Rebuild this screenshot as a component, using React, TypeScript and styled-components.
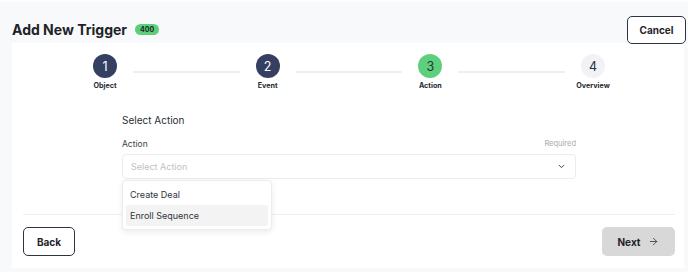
import React from "react";
import styled, { createGlobalStyle } from "styled-components";
import { ArrowRight, ChevronDown } from "lucide-react";

const GlobalStyle = createGlobalStyle`
  html, body {
    margin: 0;
    padding: 0;
    background: #f8f9fa;
    font-family: Inter, "Liberation Sans", sans-serif;
    color: #222831;
  }
  * { box-sizing: border-box; }
`;

const Page = styled.div`
  width: 688px;
  height: 272px;
  border-top: 2px solid #fdfdfe;
  overflow: hidden;
`;

const Header = styled.div`
  display: flex;
  align-items: center;
  justify-content: space-between;
  height: 41px;
  padding: 14px 2px 0 12px;
`;

const TitleWrap = styled.div`
  display: flex;
  align-items: center;
  gap: 8px;
`;

const Title = styled.h1`
  margin: 0;
  font-size: 14px;
  font-weight: 700;
  color: #1f2329;
`;

const Badge = styled.span`
  display: inline-flex;
  align-items: center;
  justify-content: center;
  height: 11px;
  padding: 0 5px;
  border-radius: 6px;
  background: #5ccf7c;
  color: #1d2b22;
  font-size: 7px;
  font-weight: 700;
`;

const OutlineButton = styled.button<{ $w: number; $h: number }>`
  width: ${(p) => p.$w}px;
  height: ${(p) => p.$h}px;
  border: 1.5px solid #2b3444;
  border-radius: 5px;
  background: #ffffff;
  color: #1f2329;
  font-family: inherit;
  font-size: 10px;
  font-weight: 700;
`;

const Panel = styled.div`
  margin: 0 4px 0 12px;
  height: 225px;
  background: #ffffff;
  padding: 11px 9px 0 11px;
  display: flex;
  flex-direction: column;
`;

const Stepper = styled.div`
  width: 512px;
  margin: 0 auto;
  display: flex;
  align-items: center;
`;

const Step = styled.div`
  width: 24px;
  display: flex;
  flex-direction: column;
  align-items: center;
  gap: 3px;
`;

const Circle = styled.div<{ $state: "done" | "active" | "todo" }>`
  width: 24px;
  height: 24px;
  border-radius: 50%;
  display: flex;
  align-items: center;
  justify-content: center;
  font-size: 12.5px;
  background: ${(p) =>
    p.$state === "done" ? "#353f62" : p.$state === "active" ? "#5dd07e" : "#f1f2f5"};
  color: ${(p) => (p.$state === "done" ? "#ffffff" : "#2a2f3a")};
`;

const StepLabel = styled.span`
  font-size: 7.2px;
  font-weight: 700;
  line-height: 9px;
  white-space: nowrap;
  color: #262a33;
`;

const Connector = styled.div`
  flex: 1;
  height: 2px;
  margin: 0 16px;
  background: #efefef;
`;

const Form = styled.div`
  width: 454px;
  margin: 23px auto 0;
`;

const SectionTitle = styled.div`
  font-size: 10px;
  line-height: 14px;
  color: #2b2f36;
`;

const LabelRow = styled.div`
  display: flex;
  justify-content: space-between;
  align-items: center;
  margin-top: 11px;
  line-height: 12px;
`;

const Label = styled.span`
  font-size: 8.5px;
  color: #3a3e45;
`;

const Hint = styled.span`
  font-size: 7.5px;
  color: #a9abaf;
`;

const SelectWrap = styled.div`
  position: relative;
  margin-top: 4px;
`;

const SelectBox = styled.div`
  height: 25px;
  border: 1px solid #ececec;
  border-radius: 4px;
  display: flex;
  align-items: center;
  justify-content: space-between;
  padding: 0 9px 0 8px;
  color: #bfc1c5;
  font-size: 9px;
  svg { color: #2d3a5a; }
`;

const Menu = styled.div`
  position: absolute;
  top: 26px;
  left: 0;
  width: 150px;
  padding: 3px;
  background: #ffffff;
  border: 1px solid #ececec;
  border-radius: 4px;
  box-shadow: 0 2px 6px rgba(0, 0, 0, 0.08);
  z-index: 2;
`;

const MenuItem = styled.div<{ $hover?: boolean }>`
  height: 21px;
  display: flex;
  align-items: center;
  padding-left: 4px;
  border-radius: 2px;
  font-size: 9px;
  color: #30343b;
  background: ${(p) => (p.$hover ? "#f3f3f4" : "transparent")};
`;

const Footer = styled.div`
  margin-top: auto;
  border-top: 1px solid #efefef;
  padding: 12px 0;
  display: flex;
  justify-content: space-between;
`;

const NextButton = styled.button`
  width: 73px;
  height: 29px;
  border: none;
  border-radius: 5px;
  background: #d8d8d9;
  color: #1f2329;
  font-family: inherit;
  font-size: 10px;
  font-weight: 700;
  display: flex;
  align-items: center;
  justify-content: center;
  gap: 8px;
`;

const steps = [
  { n: 1, label: "Object", state: "done" as const },
  { n: 2, label: "Event", state: "done" as const },
  { n: 3, label: "Action", state: "active" as const },
  { n: 4, label: "Overview", state: "todo" as const },
];

export default function App() {
  return (
    <>
      <GlobalStyle />
      <Page>
        <Header>
          <TitleWrap>
            <Title>Add New Trigger</Title>
            <Badge>400</Badge>
          </TitleWrap>
          <OutlineButton $w={59} $h={28}>Cancel</OutlineButton>
        </Header>
        <Panel>
          <Stepper>
            {steps.map((s, i) => (
              <React.Fragment key={s.n}>
                {i > 0 && <Connector />}
                <Step>
                  <Circle $state={s.state}>{s.n}</Circle>
                  <StepLabel>{s.label}</StepLabel>
                </Step>
              </React.Fragment>
            ))}
          </Stepper>
          <Form>
            <SectionTitle>Select Action</SectionTitle>
            <LabelRow>
              <Label>Action</Label>
              <Hint>Required</Hint>
            </LabelRow>
            <SelectWrap>
              <SelectBox>
                Select Action
                <ChevronDown size={9} strokeWidth={2.6} />
              </SelectBox>
              <Menu>
                <MenuItem>Create Deal</MenuItem>
                <MenuItem $hover>Enroll Sequence</MenuItem>
              </Menu>
            </SelectWrap>
          </Form>
          <Footer>
            <OutlineButton $w={52} $h={29}>Back</OutlineButton>
            <NextButton>
              Next <ArrowRight size={11} strokeWidth={1.6} />
            </NextButton>
          </Footer>
        </Panel>
      </Page>
    </>
  );
}
